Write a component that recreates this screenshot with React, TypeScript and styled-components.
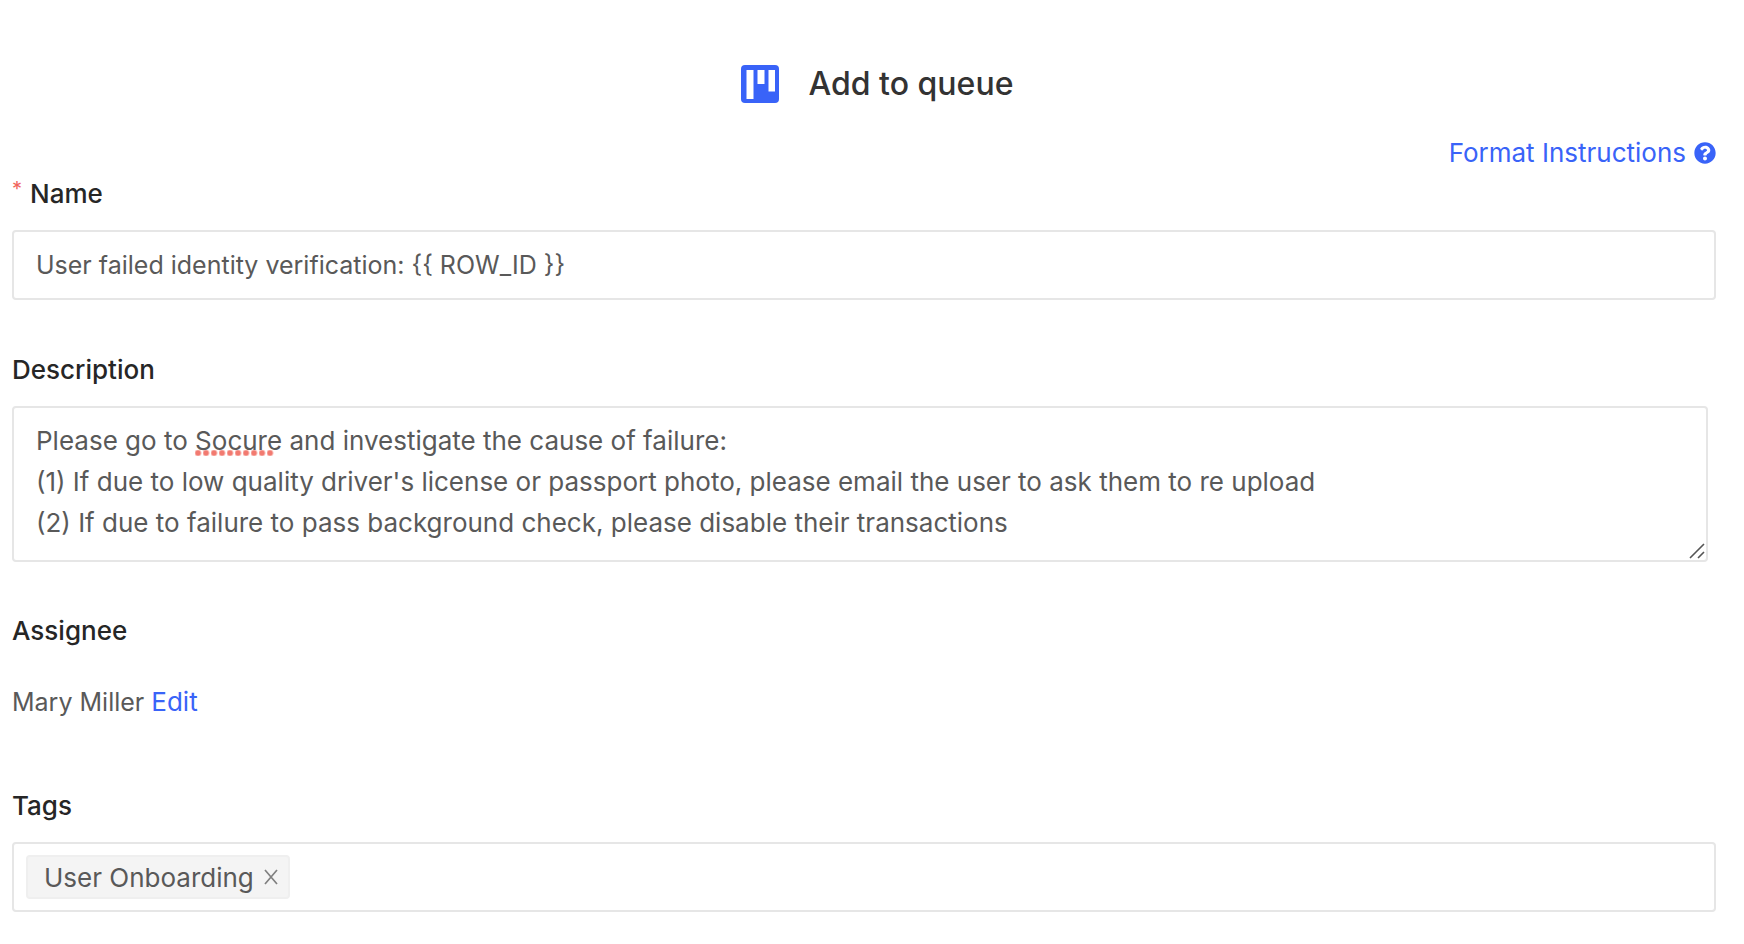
import React, { useLayoutEffect, useRef, useState } from 'react';
import styled, { createGlobalStyle } from 'styled-components';
import { FaQuestionCircle } from 'react-icons/fa';

const GlobalStyle = createGlobalStyle`
  *, *::before, *::after { box-sizing: border-box; }
  body {
    margin: 0;
    background: #ffffff;
    color: #595959;
    font-family: Inter, "Liberation Sans", sans-serif;
    font-size: 25px;
    line-height: 41px;
  }
`;

const Page = styled.form`
  padding: 60px 28px 34px 12px;
`;

const Header = styled.header`
  display: flex;
  align-items: center;
  justify-content: center;
  gap: 30px;
  padding-left: 26px;
`;

const Title = styled.h1`
  margin: 0;
  color: #333333;
  font-size: 32px;
  font-weight: 500;
  line-height: 48px;
`;

const HelpRow = styled.div`
  display: flex;
  justify-content: flex-end;
  margin-top: 24px;
`;

const Link = styled.a`
  display: inline-flex;
  align-items: center;
  gap: 8px;
  color: #3963f8;
  font-size: 26px;
  text-decoration: none;
`;

const Field = styled.section<{ $gap: number }>`
  display: flex;
  flex-direction: column;
  margin-bottom: ${({ $gap }) => $gap}px;
`;

const Label = styled.label`
  display: flex;
  align-items: center;
  gap: 8px;
  margin: 0 0 16px;
  color: #262626;
  font-size: 26px;
  font-weight: 500;
`;

const Required = styled.span`
  color: #f0635c;
  font-size: 20px;
  font-weight: 400;
  line-height: 32px;
  align-self: flex-start;
`;

const TextInput = styled.input`
  width: 100%;
  height: 70px;
  padding: 0 22px;
  border: 2px solid #e6e6e6;
  border-radius: 4px;
  outline: none;
  background: #ffffff;
  color: inherit;
  font: inherit;
`;

const AreaWrap = styled.div`
  position: relative;
  margin-right: 8px;
`;

const TextArea = styled.textarea`
  display: block;
  width: 100%;
  height: 156px;
  padding: 12px 22px;
  border: 2px solid #e6e6e6;
  border-radius: 4px;
  outline: none;
  resize: none;
  overflow: hidden;
  background: #ffffff;
  color: inherit;
  font: inherit;
  font-size: 26px;
`;

const SpellingMark = styled.span`
  position: absolute;
  height: 6px;
  background: radial-gradient(circle at 3px 3px, #f27a70 2px, #f27a7000 4px) left top / 8px 6px repeat-x;
  pointer-events: none;
`;

const Grip = styled.svg`
  position: absolute;
  right: 3px;
  bottom: 3px;
  pointer-events: none;
`;

const Assignee = styled.p`
  margin: 0;
  padding: 14px 0;
`;

const TagBox = styled.div`
  display: flex;
  align-items: center;
  min-height: 70px;
  padding: 0 12px;
  border: 2px solid #e6e6e6;
  border-radius: 4px;
`;

const Tag = styled.span`
  display: inline-flex;
  align-items: center;
  gap: 10px;
  height: 44px;
  padding: 0 10px 0 16px;
  border: 2px solid #efefef;
  border-radius: 4px;
  background: #f4f4f4;
  font-size: 26px;
`;

const CloseButton = styled.button`
  display: inline-flex;
  padding: 0;
  border: 0;
  background: none;
  color: #808080;
  cursor: pointer;
`;

const TagInput = styled.input`
  flex: 1;
  min-width: 0;
  margin-left: 8px;
  border: 0;
  outline: none;
  background: none;
  color: inherit;
  font: inherit;
`;

function BoardIcon() {
  return (
    <svg width="38" height="38" viewBox="0 0 38 38" aria-hidden="true">
      <rect width="38" height="38" rx="4" fill="#3963f8" />
      <path d="M5.5 5H12.5v29H5.5zM16.5 5H23.5v14h-7zM27.5 5H34v21.5h-6.5z" fill="#ffffff" />
    </svg>
  );
}

function CloseIcon() {
  return (
    <svg width="14" height="16" viewBox="0 0 14 16" aria-hidden="true">
      <path d="M1 1l12 14M13 1L1 15" stroke="currentColor" strokeWidth="1.7" fill="none" />
    </svg>
  );
}

const DESCRIPTION = `Please go to Socure and investigate the cause of failure:
(1) If due to low quality driver's license or passport photo, please email the user to ask them to re upload
(2) If due to failure to pass background check, please disable their transactions`;

const UNKNOWN_WORD = 'Socure';
const DOT_PITCH = 8;

type Mark = { left: number; top: number; width: number };

function SpellCheckedArea({ id, initial }: { id: string; initial: string }) {
  const [text, setText] = useState(initial);
  const [mark, setMark] = useState<Mark | null>(null);
  const area = useRef<HTMLTextAreaElement>(null);

  // Measure the text before the unknown word to place the dots under it.
  useLayoutEffect(() => {
    const lines = text.split('\n');
    const row = lines.findIndex((line) => line.includes(UNKNOWN_WORD));
    const ctx = document.createElement('canvas').getContext('2d');
    if (row < 0 || !ctx || !area.current) {
      setMark(null);
      return;
    }
    const css = getComputedStyle(area.current);
    ctx.font = `${css.fontWeight} ${css.fontSize} ${css.fontFamily}`;
    const before = lines[row].slice(0, lines[row].indexOf(UNKNOWN_WORD));
    const lineHeight = parseFloat(css.lineHeight);
    setMark({
      left: Math.round(24 + ctx.measureText(before).width),
      top: 14 + row * lineHeight + 30,
      width: Math.floor(ctx.measureText(UNKNOWN_WORD).width / DOT_PITCH) * DOT_PITCH,
    });
  }, [text]);

  return (
    <AreaWrap>
      <TextArea
        id={id}
        ref={area}
        spellCheck={false}
        value={text}
        onChange={(e) => setText(e.target.value)}
      />
      {mark && <SpellingMark style={mark} />}
      <Grip width="16" height="16" viewBox="0 0 16 16" aria-hidden="true">
        <path d="M1 15L15 1M9 15l6-6" stroke="#555555" strokeWidth="1.6" fill="none" />
      </Grip>
    </AreaWrap>
  );
}

export default function App() {
  const [name, setName] = useState('User failed identity verification: {{ ROW_ID }}');
  const [tags, setTags] = useState(['User Onboarding']);

  return (
    <>
      <GlobalStyle />
      <Page onSubmit={(e) => e.preventDefault()}>
        <Header>
          <BoardIcon />
          <Title>Add to queue</Title>
        </Header>

        <HelpRow>
          <Link href="#format">
            Format Instructions
            <FaQuestionCircle size={22} aria-hidden="true" />
          </Link>
        </HelpRow>

        <Field $gap={49}>
          <Label htmlFor="name">
            <Required>*</Required>
            Name
          </Label>
          <TextInput id="name" required value={name} onChange={(e) => setName(e.target.value)} />
        </Field>

        <Field $gap={48}>
          <Label htmlFor="description">Description</Label>
          <SpellCheckedArea id="description" initial={DESCRIPTION} />
        </Field>

        <Field $gap={48}>
          <Label as="h2">Assignee</Label>
          <Assignee>
            Mary Miller <Link href="#edit">Edit</Link>
          </Assignee>
        </Field>

        <Field $gap={0}>
          <Label htmlFor="tags">Tags</Label>
          <TagBox>
            {tags.map((tag) => (
              <Tag key={tag}>
                {tag}
                <CloseButton
                  type="button"
                  aria-label={`Remove ${tag}`}
                  onClick={() => setTags(tags.filter((t) => t !== tag))}
                >
                  <CloseIcon />
                </CloseButton>
              </Tag>
            ))}
            <TagInput id="tags" />
          </TagBox>
        </Field>
      </Page>
    </>
  );
}
